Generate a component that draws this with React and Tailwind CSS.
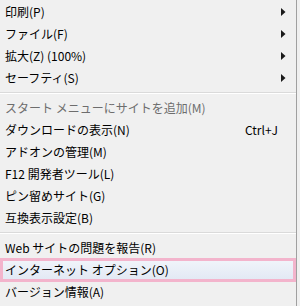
import React from 'react';

const Arrow = () => (
    <svg width="5" height="8" viewBox="0 0 5 8" className="absolute right-[10px] top-[7px]">
        <path d="M0 0 L4.5 4 L0 8 Z" fill="#1a1a1a" />
    </svg>
);

const Item = ({ label, shortcut, sub, disabled, active }) => (
    <div
        className={`relative flex items-center pr-[18px] text-[12px] ${disabled ? 'text-[#6d6d6d]' : 'text-black'} ${active ? 'h-[24px] -my-px border-[3px] border-[#f3b4cc] bg-gradient-to-b from-[#f0f4fa] to-[#e3e9f4] pl-[2px]' : 'h-[22px] pl-[5px]'}`}
    >
        <span className="flex-1 whitespace-nowrap">{label}</span>
        {shortcut && <span className="whitespace-nowrap">{shortcut}</span>}
        {sub && <Arrow />}
    </div>
);

const Separator = () => (
    <div className="h-[8px] flex flex-col justify-center">
        <div className="h-px bg-[#dadada]" />
        <div className="h-px bg-white" />
    </div>
);

export default function App() {
    return (
        <div
            className="w-[300px] h-[306px] flex bg-[#f0f0f0]"
            style={{ fontFamily: '"Noto Sans CJK JP", "Noto Sans", sans-serif' }}
        >
            <div className="w-[297px] border-r border-[#a0a0a0] pt-px">
                <Item label="印刷(P)" sub />
                <Item label="ファイル(F)" sub />
                <Item label="拡大(Z) (100%)" sub />
                <Item label="セーフティ(S)" sub />
                <Separator />
                <Item label="スタート メニューにサイトを追加(M)" disabled />
                <Item label="ダウンロードの表示(N)" shortcut="Ctrl+J" />
                <Item label="アドオンの管理(M)" />
                <Item label="F12 開発者ツール(L)" />
                <Item label="ピン留めサイト(G)" />
                <Item label="互換表示設定(B)" />
                <Separator />
                <Item label="Web サイトの問題を報告(R)" />
                <Item label="インターネット オプション(O)" active />
                <Item label="バージョン情報(A)" />
            </div>
        </div>
    );
}
